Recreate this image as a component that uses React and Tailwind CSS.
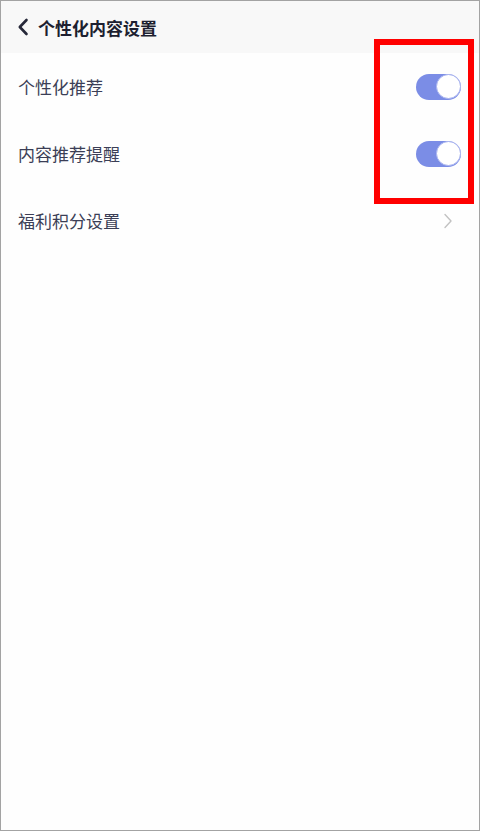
import React from "react";

function Toggle() {
  return (
    <div className="relative w-[45px] h-[26px] rounded-full bg-[#7b8de6] flex items-center justify-end">
      <div className="w-[25px] h-[25px] rounded-full bg-white border border-[#a9b4ef]" />
    </div>
  );
}

function Row({ label, right }) {
  return (
    <div className="h-[67px] flex items-center justify-between pl-[17px] pr-[18px]">
      <span className="text-[17px] text-[#3b3e56] leading-none">{label}</span>
      {right}
    </div>
  );
}

export default function App() {
  return (
    <div
      className="relative w-[480px] h-[831px] bg-[#fefefe] border border-[#a3a3a3] overflow-hidden"
      style={{ fontFamily: '"Noto Sans CJK SC", "Noto Sans", sans-serif' }}
    >
      <div className="h-[52px] bg-[#f8f8f8] flex items-center pl-[16px]">
        <svg width="12" height="18" viewBox="0 0 12 18" className="mr-[9px]">
          <path d="M9.5 2 L2.8 9 L9.5 16" fill="none" stroke="#262839" strokeWidth="2.6" strokeLinecap="round" strokeLinejoin="round" />
        </svg>
        <span className="text-[17px] font-bold text-[#1d1f30] leading-none">个性化内容设置</span>
      </div>
      <Row label="个性化推荐" right={<Toggle />} />
      <Row label="内容推荐提醒" right={<Toggle />} />
      <Row
        label="福利积分设置"
        right={
          <svg width="10" height="16" viewBox="0 0 10 16" className="mr-[8px]">
            <path d="M2 1.5 L8 8 L2 14.5" fill="none" stroke="#c2c2c2" strokeWidth="1.4" strokeLinecap="round" strokeLinejoin="round" />
          </svg>
        }
      />
      <div className="absolute left-[373px] top-[38px] w-[100px] h-[165px] border-[6px] border-[#ff0000]" />
    </div>
  );
}
